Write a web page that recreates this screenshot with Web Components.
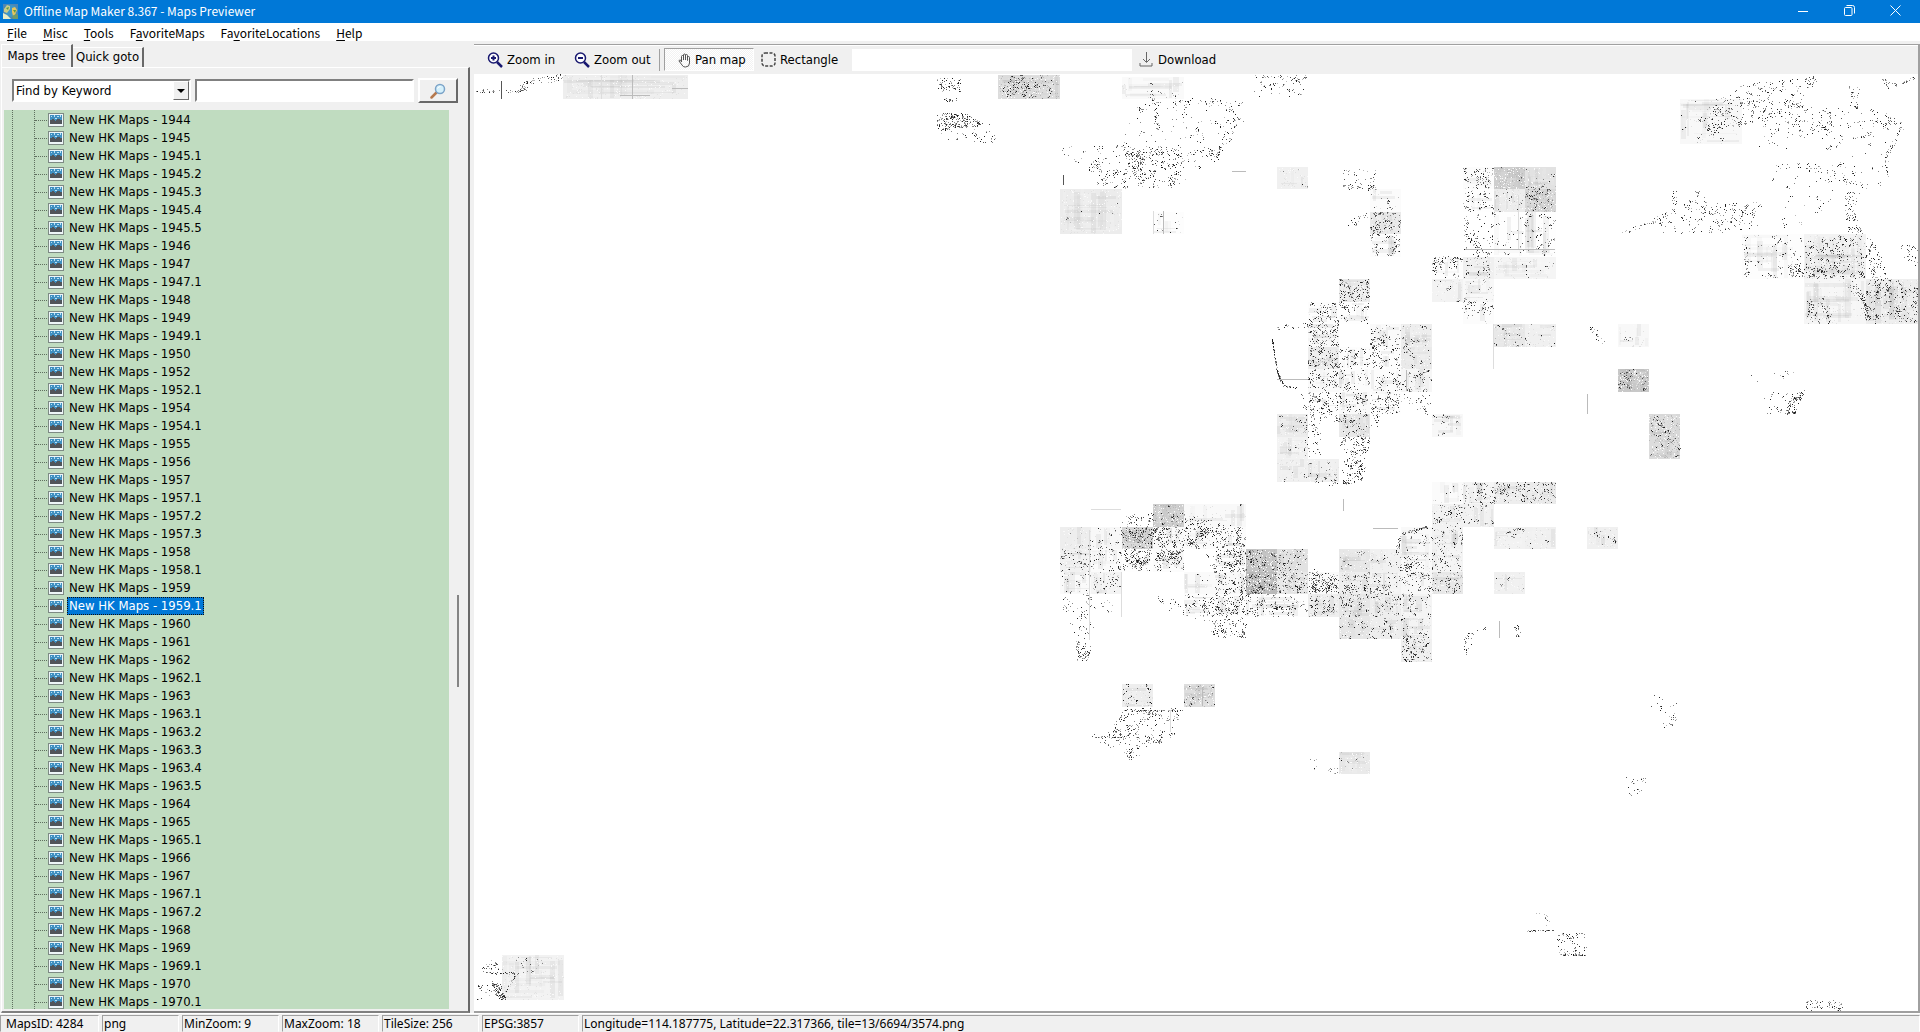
<!DOCTYPE html>
<html lang="en">
<head>
<meta charset="utf-8">
<title>Offline Map Maker 8.367 - Maps Previewer</title>
<style>
  html, body { margin: 0; height: 100%; }
  body { font: 13px/18px "DejaVu Sans Condensed", "DejaVu Sans", sans-serif; color: #000; background: #f0f0f0; overflow: hidden; }
</style>
</head>
<body>
<map-maker-app></map-maker-app>

<script>
const define = (name, html, setup) => customElements.define(name, class extends HTMLElement {
  connectedCallback() {
    if (this.shadowRoot) return;
    const root = this.attachShadow({ mode: 'open' });
    root.innerHTML = '<style>*{box-sizing:border-box}button,input,select{font:inherit;color:inherit;margin:0;border-radius:0}</style>' + html;
    if (setup) setup.call(this, root);
  }
});

/* ---------- title bar ---------- */
define('title-bar', `
<style>
  :host { display: flex; align-items: center; height: 23px; background: #0078d7; color: #fff; padding-left: 3px; box-sizing: border-box; flex: none; font-family: "Noto Sans CJK SC", "Noto Sans", sans-serif; font-size: 12px; }
  h1 { font: inherit; line-height: 18px; margin: 0 0 0 6px; padding-bottom: 1px; flex: 1; }
  button { width: 46px; height: 21px; border: 0; background: none; padding: 0; display: grid; place-items: center; align-self: flex-start; }
  svg { display: block; }
  .buttons { display: flex; align-self: flex-start; padding-right: 2px; }
</style>
<svg width="15" height="15" viewBox="0 0 15 15">
  <rect width="15" height="15" fill="#4d87b4"/><circle cx="8" cy="7" r="6" fill="#3f97c8"/>
  <path d="M1 5l3-4 3 1 0 3-3 4-3-1z" fill="#c9cc8a"/><path d="M9 4l3-1 2 3-2 5-2 1-1-4z" fill="#e8c65c"/><path d="M3 4l3-1-1 3zM10 6l3 0-1 3z" fill="#5c9a45"/>
  <path d="M0 9l4 2 3 3 1 1-8 0z" fill="#e9edc8"/><path d="M9 12l4-2 2 1 0 4-5 0z" fill="#6f9a6c"/>
</svg>
<h1><slot></slot></h1>
<div class="buttons">
<button aria-label="Minimize"><svg width="11" height="11" viewBox="0 0 11 11"><path d="M0 6.5h10" stroke="#fff"/></svg></button>
<button aria-label="Restore"><svg width="11" height="11" viewBox="0 0 11 11" fill="none" stroke="#fff"><rect x=".5" y="2.500" width="7.500" height="8" rx="1"/><path d="M2.500 .5H8.500Q10.500 .5 10.500 2.500V8.500"/></svg></button>
<button aria-label="Close"><svg width="11" height="11" viewBox="0 0 11 11"><path d="M.5 .5l10 10M10.500 .5l-10 10" stroke="#fff"/></svg></button>
</div>
`);

/* ---------- menu ---------- */
define('menu-bar', `
<style>
  :host { display: flex; gap: 16px; height: 18px; padding-left: 7px; background: #fff; box-sizing: border-box; flex: none; font-family: "Noto Sans CJK SC", "Noto Sans", sans-serif; font-size: 12px; }
  button { border: 0; background: none; padding: 0; height: 18px; line-height: 17px; }
  u { text-underline-offset: 2px; }
</style>
<button><u>F</u>ile</button><button><u>M</u>isc</button><button><u>T</u>ools</button><button>F<u>a</u>voriteMaps</button><button>Fa<u>v</u>oriteLocations</button><button><u>H</u>elp</button>
`);

/* ---------- one tree row ---------- */
define('tree-node', `
<style>
  :host { display: flex; align-items: center; height: 18px; }
  i { width: 12px; margin-left: 31px; border-top: 1px dotted #5f6f5f; }
  svg { margin: 0 3px 0 1px; flex: none; }
  span { border: 1px solid transparent; line-height: 16px; height: 18px; padding: 0 1px; white-space: nowrap; }
  :host([selected]) span { background: #0078d7; color: #fff; border: 1px dotted #111; }
</style>
<i></i>
<svg width="16" height="14" viewBox="0 0 16 14" shape-rendering="crispEdges">
  <rect width="16" height="14" fill="#7d8a84"/><rect x="1" y="1" width="14" height="12" fill="#eef6f8"/>
  <rect x="2" y="2" width="12" height="9" fill="#3f8fc0"/>
  <path d="M3 3h1v1h-1zM6 2h1v2h-1zM9 3h2v1h-2zM12 2h1v2h-1zM7 5h2v1h-2z" fill="#b9e2f5"/>
  <path d="M2 11V7l3-1 2 2 3-2 4 1v4z" fill="#50555a"/>
</svg>
<span><slot></slot></span>
`);

define('map-tree', `
<style>
  :host { display: block; background: #c0dcc0; overflow: hidden; }
  div { min-height: 100%; padding-top: 1px; background:
     repeating-linear-gradient(#5f6f5f 0 1px, transparent 1px 2px) 8px 0 / 1px 100% no-repeat,
     repeating-linear-gradient(#5f6f5f 0 1px, transparent 1px 2px) 30px 0 / 1px 100% no-repeat; }
</style>
<div role="tree"></div>
`, function (root) {
  const box = root.querySelector('div');
  for (const n of this.getAttribute('sheets').split(' ')) {
    const row = document.createElement('tree-node');
    row.setAttribute('role', 'treeitem');
    row.textContent = 'New HK Maps - ' + n;
    if (n === this.getAttribute('current')) row.setAttribute('selected', '');
    box.append(row);
  }
});

/* ---------- left panel ---------- */
define('side-panel', `
<style>
  :host { display: flex; flex-direction: column; width: 470px; flex: none; padding: 3px 0 0 1px; box-sizing: border-box; }
  nav { display: flex; align-items: flex-end; height: 23px; }
  nav button { border: 0; background: #f0f0f0; border-top: 1px solid #fff; padding: 0; height: 20px; border-right: 2px solid #696969; }
  nav .on { height: 23px; width: 72px; border-left: 1px solid #fff; padding-bottom: 1px; }
  nav .off { width: 71px; line-height: 18px; padding-bottom: 1px; }
  .page { flex: 1; min-height: 0; display: flex; flex-direction: column; border: solid; border-width: 1px 2px 2px 1px; border-color: #fff #696969 #808080 #fff; padding: 10px 10px 2px 2px; }
  form { display: flex; align-items: center; height: 25px; margin: 0 0 7px 8px; gap: 4px; flex: none; }
  .combo { display: grid; width: 179px; height: 23px; border: 2px solid; border-color: #808080 #fff #fff #808080; background: #fff; }
  .combo > * { grid-area: 1 / 1; }
  select { appearance: none; border: 0; background: none; padding: 0 0 0 2px; width: 100%; height: 19px; outline: 0; }
  .arrow { justify-self: end; width: 16px; height: 19px; background: #f0f0f0; border: 1px solid; border-color: #fff #696969 #696969 #fff; display: grid; place-items: center; pointer-events: none; }
  input { flex: 1; min-width: 0; height: 23px; border: 2px solid; border-color: #808080 #fff #fff #808080; background: #fff; padding: 0 2px; }
  form button { width: 40px; height: 25px; border: 2px solid; border-color: #fff #696969 #696969 #fff; background: #f0f0f0; padding: 0; display: grid; place-items: center; }
  .body { flex: 1; min-height: 0; display: flex; justify-content: space-between; }
  map-tree { width: 445px; }
  .bar { width: 2px; height: 92px; background: #858585; margin: 485px -1px 0 0; }
</style>
<nav><button class="on">Maps tree</button><button class="off">Quick goto</button></nav>
<div class="page">
  <form onsubmit="return false">
    <span class="combo"><select aria-label="Find by"><option>Find by Keyword</option></select>
      <span class="arrow"><svg width="8" height="4" viewBox="0 0 8 4"><path d="M0 0h8L4 4z"/></svg></span></span>
    <input type="text" aria-label="Keyword">
    <button aria-label="Search"><svg width="16" height="16" viewBox="0 0 16 16"><path d="M6.500 9.500L1.500 14.500" stroke="#b5784e" stroke-width="2.500" stroke-linecap="round"/><circle cx="10" cy="6" r="4.500" fill="#d5f0fb" stroke="#7ba3c8" stroke-width="1.500"/><path d="M7.500 5.500q1-2 3-2" stroke="#fff" fill="none"/></svg></button>
  </form>
  <div class="body">
    <map-tree current="1959.1" sheets="1944 1945 1945.1 1945.2 1945.3 1945.4 1945.5 1946 1947 1947.1 1948 1949 1949.1 1950 1952 1952.1 1954 1954.1 1955 1956 1957 1957.1 1957.2 1957.3 1958 1958.1 1959 1959.1 1960 1961 1962 1962.1 1963 1963.1 1963.2 1963.3 1963.4 1963.5 1964 1965 1965.1 1966 1967 1967.1 1967.2 1968 1969 1969.1 1970 1970.1"></map-tree>
    <div class="bar"></div>
  </div>
</div>
`);

/* ---------- toolbar ---------- */
define('tool-bar', `
<style>
  :host { display: flex; align-items: center; height: 30px; border-top: 1px solid #a0a0a0; box-shadow: inset 0 1px #fff; background: #f0f0f0; padding-left: 9px; box-sizing: border-box; flex: none; }
  button { display: flex; align-items: center; gap: 4px; border: 0; background: none; padding: 0 0 0 4px; height: 23px; white-space: nowrap; }
  .in { width: 87px; } .out { width: 88px; }
  hr { width: 1px; height: 22px; margin: 0 4px 0 1px; border: 0; background: #a0a0a0; }
  .pan { width: 90px; padding: 1px 0 0 13px; border: 1px solid; border-color: #a0a0a0 #fff #fff #a0a0a0; background: conic-gradient(#f2f2f2 25%, #fff 0 50%, #f2f2f2 0 75%, #fff 0) 0 0 / 2px 2px; }
  .rect { width: 98px; padding-left: 7px; }
  input { width: 280px; height: 22px; border: 0; background: #fff; padding: 0 2px; }
  .down { padding-left: 7px; gap: 5px; }
  svg { flex: none; }
</style>
<button class="in"><svg width="16" height="16" viewBox="0 0 16 16" fill="none" stroke="#191970"><circle cx="6.500" cy="6" r="5" fill="#fff" stroke-width="1.500"/><path d="M10 10l5 5" stroke-width="2.500"/><path d="M6.500 3.500v5M4 6h5" stroke-width="2"/></svg>Zoom in</button>
<button class="out"><svg width="16" height="16" viewBox="0 0 16 16" fill="none" stroke="#191970"><circle cx="6.500" cy="6" r="5" fill="#fff" stroke-width="1.500"/><path d="M10 10l5 5" stroke-width="2.500"/><path d="M4 6h5" stroke-width="2"/></svg>Zoom out</button>
<hr>
<button class="pan" aria-pressed="true"><svg width="13" height="15" viewBox="0 0 13 15" fill="none" stroke="#555"><path d="M3.500 9V3.500q0-1 1-1t1 1V7V2q0-1 1-1t1 1v5V2.500q0-1 1-1t1 1V7.500V4.500q0-1 1-1t1 1V10q0 4-4 4H7q-2 0-3-2L1 8q0-1 1-1t1.500 2"/></svg>Pan map</button>
<button class="rect"><svg width="15" height="15" viewBox="0 0 15 15" fill="none" stroke="#444" stroke-width="1.500"><rect x="1" y="1" width="13" height="13" rx="3" stroke-dasharray="3 1.500"/></svg>Rectangle</button>
<input type="text" aria-label="Area">
<button class="down"><svg width="14" height="15" viewBox="0 0 14 15" fill="none" stroke="#666"><path d="M7.500 0v10M4 7l3.500 3.500L11 7M1 11v3h12v-3"/></svg>Download</button>
`);

/* ---------- map canvas ---------- */
define('map-view', `
<style>
  :host { display: block; flex: 1; min-height: 0; background: #fff; overflow: hidden; }
  svg { display: block; width: 100%; height: 100%; }
</style>
<svg viewBox="474 74 1444 937" preserveAspectRatio="xMinYMin slice" shape-rendering="crispEdges" role="img" aria-label="Map"></svg>
`, function (root) {
  let seed = 7;
  const rnd = () => ((seed = (seed * 1664525 + 1013904223) >>> 0) / 4294967296);
  const X = c => 1060 + 31 * c, Y = r => Math.round(76.5 + 22.5 * r);
  const inks = ['#222', '#555', '#888', '#bbb', '#e2e2e2', '#fafafa'];
  const dots = inks.map(() => []);
  const put = (k, x, y, w) => dots[k].push(`M${Math.round(x)} ${Math.round(y)}h${w || 1}`);
  const ink = () => { const v = rnd(); return v < .17 ? 0 : v < .42 ? 1 : v < .72 ? 2 : 3; };
  let fills = '';
  /* paper: scanned background, uneven tone in overlapping bands plus fine grain */
  const paper = (x, y, w, h, g) => {
    fills += `<rect x="${x}" y="${y}" width="${w}" height="${h}" fill="rgb(${g},${g},${g})"/>`;
    for (let i = 0; i < w * h / 60; i++) {
      const tall = rnd() < .5, a = tall ? 2 + Math.round(rnd() * 4) : Math.round(w * (.3 + rnd() * .5)), b = tall ? Math.round(h * (.3 + rnd() * .6)) : 1 + Math.round(rnd() * 3);
      const px = x + Math.floor(rnd() * (w - a)), py = y + Math.floor(rnd() * (h - b));
      fills += `<rect x="${px}" y="${py}" width="${a}" height="${b}" fill="${rnd() < .6 ? '#fff' : '#888'}" opacity="${rnd() < .6 ? .1 : .04}"/>`;
    }
    const n = w * h * (255 - g) / 260;
    for (let i = 0; i < n; i++) put(rnd() < .4 ? 5 : (g < 225 && rnd() < .6 ? 3 : 4), x + rnd() * (w - 1), y + rnd() * (h - 1) + .5);
  };
  /* ink gathers in loose clumps */
  const speck = (x, y, w, h, d) => {
    for (let i = 0; i < w * h * d;) {
      const cx = x + rnd() * (w - 1), cy = y + rnd() * (h - 1), m = rnd() < .3 ? 4 : 1;
      for (let j = 0; j < m; j++, i++) put(ink(), Math.min(x + w - 1, Math.max(x, cx + (j ? rnd() * 4 - 2 : 0))), Math.min(y + h - 1, Math.max(y, cy + (j ? rnd() * 4 - 2 : 0))));
    }
  };
  /* tiles: column, row, columns, rows, paper grey, speck density */
  [[2,0,2,1,250,.004],[0,5,2,2,236,.003],[3,6,1,1,253,.025],[7,4,1,1,240,.01],[14,4,1,1,206,.01],[15,4,1,1,226,.02],[14,5,1,1,236,.03],[15,5,1,1,214,.08],
   [13,4,1,1,252,.15],[13,5,1,1,254,.1],[13,6,1,2,255,.05],[14,6,1,2,254,.03],[15,6,1,2,254,.06],[10,6,1,1,234,.2],[10,7,1,1,253,.12],[10,5,1,1,251,.02],
   [12,8,1,1,253,.08],[13,8,1,1,240,.06],[14,8,2,1,245,.01],[12,9,1,1,243,.02],[13,9,1,1,248,.02],[13,10,1,1,252,.03],
   [9,9,1,1,236,.22],[8,10,1,1,253,.15],[8,11,1,1,250,.22],[9,10,1,1,254,.05],[10,11,1,1,250,.14],[11,11,1,1,238,.05],[14,11,1,1,232,.03],[15,11,1,1,240,.02],[18,11,1,1,248,.01],
   [20,1,2,2,248,.01],[22,7,2,2,253,.04],[24,7,2,2,243,.13],[24,9,2,2,246,.003],[26,9,2,2,238,.14],
   [8,12,1,1,238,.2],[9,12,1,1,253,.13],[10,12,1,1,253,.13],[11,12,1,1,234,.05],[8,13,1,1,250,.15],[9,13,1,1,252,.09],[10,13,1,1,252,.08],[11,13,1,1,246,.11],
   [8,14,1,1,254,.18],[9,14,1,1,250,.14],[10,14,1,1,254,.13],[7,15,1,1,236,.03],[7,16,1,1,242,.02],[7,17,1,1,240,.01],[8,17,1,1,240,.05],[9,15,1,1,232,.12],[12,15,1,1,248,.04],
   [18,13,1,1,200,.1],[19,15,1,1,216,.03],[19,16,1,1,220,.02],[12,18,1,1,251,.005],[13,18,1,1,245,.05],[14,18,1,1,238,.13],[15,18,1,1,235,.12],[12,19,1,1,242,.06],[13,19,1,1,241,.05],
   [12,20,1,1,242,.08],[12,21,1,1,244,.09],[12,22,1,1,232,.14],[14,20,1,1,242,.02],[15,20,1,1,240,.01],[17,20,1,1,240,.01],[14,22,1,1,240,.01],
   [3,19,1,1,206,.02],[4,19,2,1,249,.003],[2,20,1,1,212,.18],[0,20,1,1,238,.02],[0,21,1,1,241,.12],[1,20,1,1,248,.05],[1,21,1,1,251,.09],[3,20,1,1,250,.19],[4,20,1,1,251,.14],[5,20,1,1,252,.12],
   [2,21,1,1,254,.15],[3,21,1,1,252,.16],[5,21,1,1,253,.16],[5,22,1,1,249,.13],[0,22,1,1,250,.05],[1,22,1,1,244,.09],[4,22,1,1,250,.01],
   [6,21,1,1,196,.14],[7,21,1,1,226,.1],[6,22,1,1,184,.18],[7,22,1,1,232,.18],[9,21,1,1,230,.03],[10,21,1,1,241,.03],[11,20,1,2,249,.03],[8,22,1,1,250,.22],[9,22,1,1,238,.15],[10,22,1,1,243,.11],[11,22,1,1,248,.1],
   [6,23,2,1,253,.13],[8,23,1,1,238,.13],[9,23,1,1,231,.14],[10,23,1,1,238,.1],[11,23,1,1,244,.08],[9,24,1,1,230,.06],[10,24,1,1,237,.08],[11,24,1,1,244,.08],[11,25,1,1,240,.18],
   [5,23,1,1,253,.12],[4,23,1,1,253,.06],[2,27,1,1,238,.06],[4,27,1,1,222,.04],[9,30,1,1,234,.02]
  ].forEach(([c, r, w, h, g, d]) => {
    const x = X(c), y = Y(r), W = 31 * w, H = Y(r + h) - y;
    if (g < 255) paper(x, y, W, H, g);
    speck(x, y, W, H, d);
  });
  paper(563, 75, 125, 24, 238); paper(998, 75, 62, 24, 220); speck(1000, 75, 58, 24, .07);
  paper(502, 955, 62, 45, 242);

  /* five survey areas, each with its own origin and horizontal scale */
  const sheet = { A: [1040, 70, .5612], B: [1040, 320, .5612], C: [1040, 670, .5612], D: [470, 0, .4975], E: [470, 940, .357] };
  const pts = (s, str) => str.split(' ').map(p => p.split(',').map(Number)).map(([x, y]) => [sheet[s][0] + x * sheet[s][2], sheet[s][1] + y / 3]);
  const inside = (P, x, y) => { let k = false; for (let i = 0, j = P.length - 1; i < P.length; j = i++) if ((P[i][1] > y) !== (P[j][1] > y) && x < (P[j][0] - P[i][0]) * (y - P[i][1]) / (P[j][1] - P[i][1]) + P[i][0]) k = !k; return k; };
  const area = (s, str, d) => {
    const P = pts(s, str), xs = P.map(p => p[0]), ys = P.map(p => p[1]);
    const x0 = Math.min(...xs), y0 = Math.min(...ys), w = Math.max(...xs) - x0, h = Math.max(...ys) - y0;
    for (let i = 0; i < w * h * d;) {
      const x = x0 + rnd() * w, y = y0 + rnd() * h, m = rnd() < .3 ? 4 : 1;
      for (let j = 0; j < m; j++, i++) { const a = x + (j ? rnd() * 5 - 2 : 0), b = y + (j ? rnd() * 5 - 2 : 0); if (inside(P, a, b)) put(ink(), a, b); }
    }
  };
  const trail = (s, str, n, j) => {
    const P = pts(s, str);
    for (let i = 0; i < n; i++) {
      const t = rnd() * (P.length - 1), k = Math.floor(t), f = t - k;
      put(ink(), P[k][0] + (P[k + 1][0] - P[k][0]) * f + (rnd() - .5) * j, P[k][1] + (P[k + 1][1] - P[k][1]) * f + (rnd() - .5) * j);
    }
  };
  [['A','370,15 475,15 475,80 385,80',.07],['A','150,110 210,60 360,90 365,180 320,250 250,290 150,230',.025],['A','250,95 330,90 345,200 255,210',.015],
   ['A','40,230 140,225 240,230 330,220 250,350 115,355 80,290 40,260',.06],['A','145,225 185,240 185,320 150,280',.22],['A','200,230 250,220 240,350 195,330',.05],
   ['A','535,290 600,290 605,355 540,355',.05],['A','540,340 600,345 600,360 540,358',.2],['A','535,450 590,425 590,455 540,480',.06],
   ['A','1255,40 1390,15 1360,90 1330,130 1250,170 1180,210 1170,150 1200,90',.08],['A','1195,90 1290,80 1260,160 1180,190',.08],['A','1330,90 1410,120 1410,260 1390,200 1340,200',.08],
   ['A','1270,130 1340,120 1330,240 1280,230',.03],['A','1380,110 1510,110 1540,180 1500,240 1500,350 1400,320 1400,200',.03],['A','1440,40 1460,40 1455,130 1440,130',.12],
   ['A','1125,360 1180,360 1210,400 1290,390 1280,470 1200,490 1035,490 1100,450 1130,420',.06],['A','1200,400 1280,400 1280,470 1200,470',.06],['A','1435,355 1465,370 1450,420 1465,490 1440,490 1430,400',.18],
   ['A','1300,290 1400,285 1430,350 1380,440 1330,490 1310,400',.018],['A','1500,20 1520,20 1515,50 1500,70',.06],['A','1475,490 1500,560 1510,625 1480,625 1470,560',.18],['A','1530,520 1563,520 1563,590 1535,560',.12],
   ['A','1330,580 1400,590 1395,620 1335,620',.2],['A','1365,680 1410,710 1410,760 1365,760',.18],['A','1440,630 1475,700 1475,760 1440,650',.15],['A','700,558 752,558 752,575 700,580',.25],
   ['A','865,345 915,350 890,400 865,380',.15],['A','880,490 918,490 918,550 885,520',.05],
   ['B','478,280 533,280 533,310 490,310',.14],['B','590,282 610,282 600,330 590,330',.1],['B','610,220 700,220 690,290 655,250 620,290',.1],['B','535,350 588,350 575,480 540,495 533,400',.2],['B','478,480 560,480 540,495 510,495',.16],
   ['B','465,215 500,330 500,410 470,410',.08],['B','130,620 200,590 330,600 365,650 365,690 145,650',.07],['B','145,690 260,690 255,740 160,755',.13],['B','290,690 367,690 367,822 330,820 295,750',.07],
   ['B','257,822 367,822 367,955 300,950 290,900 235,880 205,830',.07],['B','300,900 365,890 365,950 300,950',.1],['B','38,822 92,822 90,960 88,1025 62,1010 60,930 40,880',.08],['B','62,960 88,960 88,1025 62,1020',.13],['B','92,822 140,822 110,940 92,950',.03],
   ['B','645,700 695,700 695,780 650,770',.08],['B','640,730 665,730 665,755 640,755',.25],['B','700,600 754,540 754,600 700,620',.05],['B','478,740 533,762 533,822 478,822',.1],
   ['B','754,930 775,930 770,970 756,1010',.16],['B','775,925 805,920 800,940 775,940',.04],['B','838,900 855,900 855,955 838,955',.1],['B','1258,150 1355,150 1362,210 1350,280 1290,280 1260,190',.018],['B','1340,220 1363,210 1345,282 1325,282',.4],['B','1285,255 1345,260 1340,282 1300,275',.07],
   ['B','975,20 990,20 1010,75 995,70',.16],['B','640,650 700,620 690,700 645,690',.02],
   ['C','150,112 250,112 240,190 200,240 185,230 165,285 145,240 118,200',.1],['C','92,182 145,180 145,240 110,240',.05],['C','185,195 215,205 215,220 190,218',.3],
   ['C','480,250 500,250 490,300 480,300',.04],['C','512,285 530,285 530,315 512,300',.14],['C','1085,50 1110,50 1110,120 1085,120',.03],['C','1110,95 1140,95 1130,170 1105,170',.07],['C','1042,315 1085,315 1065,380 1042,370',.08],
   ['C','880,720 918,745 918,780 890,770',.035],['C','919,785 975,790 975,855 919,855',.08],['C','925,835 975,830 975,855 920,855',.13],['C','1363,990 1432,990 1432,1022 1363,1022',.15],
   ['D','936,232 985,232 985,275 940,275',.22],['D','936,335 1000,340 1030,370 1020,380 940,385',.38],['D','936,385 1055,370 1055,430 940,420',.06],['D','1080,230 1125,230 1115,290 1080,280',.2],['D','950,295 980,295 980,305 950,305',.4],
   ['E','40,45 90,45 90,100 30,100',.07],['E','125,50 205,50 205,85 125,85',.05],['E','55,120 85,130 100,178 75,175',.7],['E','20,130 50,125 80,180 20,178',.08]
  ].forEach(a => area(...a));
  [['D','14,272 40,272 95,275 110,262',40,3],['D','105,262 125,240 170,235 192,228',60,7],['A','195,60 205,110 210,180',40,4],['A','250,100 330,95 350,150 320,240 310,270',70,6],['A','150,200 160,300 185,330',40,8],['A','250,300 230,350',20,5],['A','100,260 110,350 140,300',40,8],
   ['A','1510,155 1535,160 1520,220 1508,250 1508,325',60,3],['A','1310,290 1370,285 1430,330 1470,350',50,6],['A','1500,30 1530,45 1560,20',34,3],['A','1035,488 1090,455 1130,420 1130,365',60,4],['A','1450,640 1470,700 1475,750',80,5],['A','535,700 550,730 570,700',30,4],
   ['A','755,700 805,720',40,10],['A','812,760 850,810',12,3],['A','422,770 478,765',24,5],['A','758,440 760,500 790,540 800,610',60,5],['A','1255,500 1260,610',30,4],
   ['B','413,55 422,150 428,180',120,1],['B','428,180 435,195 455,205',30,2],['B','645,640 690,620',60,2],['B','635,700 640,650',30,3],['B','740,570 780,520 850,500',70,14],['B','830,640 850,625 865,630',30,2],['B','980,640 1020,655 1025,670',20,3],['B','1095,290 1115,340 1138,385',60,7],['B','150,600 200,590 280,595 360,640',120,10],
   ['C','150,121 255,121',70,1],['C','92,200 150,200',24,1],['C','865,781 915,781',30,1],['C','922,854 974,854',30,1],['E','45,98 90,98 130,100 180,90',40,2],['E','90,170 125,110',20,2]
  ].forEach(t => trail(...t));
  /* sheet-edge rules: x, y, width, height, tone */
  const tones = ['#555', '#bbb', '#ddd'];
  const rules = [[501,81,1,18,0],[601,75,1,24,2],[632,75,1,24,1],[620,95,30,1,1],[672,88,16,1,1],[1063,175,1,10,0],[1232,171,14,1,1],[1277,379,31,1,1],[1343,499,1,12,1],[1587,394,1,20,1],[1493,324,1,45,2],[1091,509,30,1,2],[1121,572,1,45,2],[1373,528,25,1,1],[1499,621,1,17,1],[1163,211,1,23,1],[1153,211,1,23,2],[1518,195,1,55,2],[1465,249,90,1,1],[1406,370,1,21,1],[1202,687,1,19,1],[1170,710,1,22,2],[1089,530,1,110,2]];
  root.querySelector('svg').innerHTML = fills
    + [4, 5, 3, 2, 1, 0].map(k => `<path transform="translate(0 .5)" d="${dots[k].join('')}" stroke="${inks[k]}"/>`).join('')
    + rules.map(([x, y, w, h, k]) => `<rect x="${x}" y="${y}" width="${w}" height="${h}" fill="${tones[k]}"/>`).join('');
});

/* ---------- status bar ---------- */
define('status-bar', `
<style>
  :host { display: flex; gap: 3px; height: 19px; padding-top: 2px; background: #f0f0f0; flex: none; box-sizing: border-box; box-shadow: inset 0 1px #fff; font-family: "Noto Sans", sans-serif; font-size: 12px; }
  ::slotted(span) { width: 97px; flex: none; border: 1px solid; border-color: #a0a0a0 #fff #f0f0f0 #a0a0a0; padding-left: 1px; line-height: 16px; white-space: nowrap; box-sizing: border-box; }
  ::slotted(.first) { width: 99px; padding-left: 5px; }
  ::slotted(.short) { width: 77px; }
  ::slotted(.wide) { flex: 1; }
</style>
<slot></slot>
`);

define('map-maker-app', `
<style>
  :host { display: flex; flex-direction: column; height: 100vh; }
  main { flex: 1; min-height: 0; display: flex; gap: 4px; }
  section { flex: 1; min-width: 0; display: flex; flex-direction: column; margin-top: 3px; border-right: 2px solid #a0a0a0; border-bottom: 2px solid #a0a0a0; }
</style>
<title-bar>Offline Map Maker 8.367 - Maps Previewer</title-bar>
<menu-bar></menu-bar>
<main>
  <side-panel></side-panel>
  <section><tool-bar></tool-bar><map-view></map-view></section>
</main>
<status-bar><span class="first">MapsID: 4284</span><span class="short">png</span><span>MinZoom: 9</span><span>MaxZoom: 18</span><span>TileSize: 256</span><span>EPSG:3857</span><span class="wide">Longitude=114.187775, Latitude=22.317366, tile=13/6694/3574.png</span></status-bar>
`);
</script>
</body>
</html>
